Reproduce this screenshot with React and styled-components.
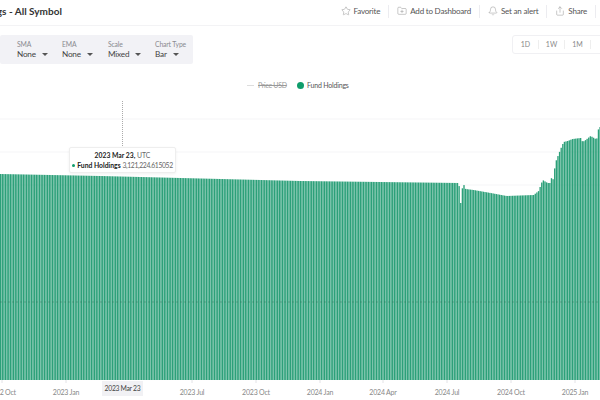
import React from 'react';
import styled, { createGlobalStyle } from 'styled-components';
import { Star, Bell, Share, FolderPlus } from 'lucide-react';

const Global = createGlobalStyle`
  html, body { margin: 0; padding: 0; background: #fff; }
  body { font-family: Lato, "Open Sans", sans-serif; color: #333; }
`;
const Page = styled.div`width: 600px; height: 400px; overflow: hidden; display: flex; flex-direction: column; background: #fff;`;
const Header = styled.header`box-sizing: border-box; height: 26px; padding-bottom: 3px; flex: none; display: flex; align-items: center; justify-content: space-between; border-bottom: 1px solid #f3f3f5;`;
const Title = styled.h1`margin: 0 0 0 -57.5px; font-size: 10px; font-weight: 700; color: #333; white-space: nowrap;`;
const Actions = styled.div`display: flex; align-items: center; margin-right: 4px;`;
const Action = styled.button`
  display: flex; align-items: center; gap: 3px; height: 13px; padding: 0 8px; border: 0; background: none;
  border-right: 1px solid #ececf0; font: 400 8px Lato, sans-serif; letter-spacing: -0.2px; color: #555; white-space: nowrap;
  svg { width: 10px; height: 10px; stroke: #888; stroke-width: 1.1; }
`;
const Controls = styled.div`height: 29px; margin-top: 9px; flex: none; display: flex; justify-content: space-between;`;
const Tools = styled.div`display: flex; width: 193px; height: 29px; background: #f2f2f6; border-radius: 2px;`;
const Tool = styled.div`width: ${p => p.$w}px; margin-left: ${p => p.$ml || 0}px; padding-top: 4px; flex: none;`;
const ToolLabel = styled.div`font-size: 6.8px; letter-spacing: -0.15px; line-height: 10px; color: #8a8a90; white-space: nowrap;`;
const ToolValue = styled.div`display: flex; align-items: center; gap: 6px; font-size: 8.2px; letter-spacing: -0.2px; line-height: 11px; color: #444;`;
const Caret = styled.span`width: 0; height: 0; border-left: 3px solid transparent; border-right: 3px solid transparent; border-top: 3.5px solid #555;`;
const Ranges = styled.div`display: flex; align-items: center; height: 17px; margin-right: -18px; border: 1px solid #f0f0f3; border-radius: 3px;`;
const Range = styled.span`box-sizing: border-box; width: 26px; height: 9px; text-align: center; font-size: 7px; color: #888; border-right: 1px solid #eee; line-height: 9px;`;
const Legend = styled.div`height: 14px; margin-top: 14px; flex: none; display: flex; align-items: center; font-size: 7px; letter-spacing: -0.2px; color: #555;`;
const Off = styled.span`flex: none; width: 46px; display: flex; align-items: center; gap: 4px; color: #999; text-decoration: line-through; margin-left: 247px; letter-spacing: -0.3px;`;
const Dash = styled.i`width: 7px; height: 1px; background: #ddd;`;
const Dot = styled.i`width: 7px; height: 7px; border-radius: 50%; background: #0f9d6b; margin: 0 3px 0 4px;`;
const ChartBox = styled.div`position: relative; flex: 1; min-height: 0;`;
const ChartSvg = styled.svg`display: block; width: 600px; height: 307px;`;
const Tip = styled.div`
  position: absolute; left: 69px; top: 55px; width: 107px; height: 26px; box-sizing: border-box; background: #fff; border: 1px solid #eee;
  border-radius: 2px; box-shadow: 0 1px 3px rgba(0,0,0,.06); text-align: center; font-size: 6.8px; line-height: 9.5px; padding-top: 3px; color: #666; white-space: nowrap;
  b { color: #222; font-weight: 700; }
`;
const TipValue = styled.span`font-size: 6.8px; letter-spacing: -0.35px;`;
const TipDot = styled.i`display: inline-block; width: 3px; height: 3px; border-radius: 50%; background: #0f9d6b; margin: 0 2px 1px 0;`;
const AxisFlag = styled.div`position: absolute; left: 102px; top: 289px; width: 41px; height: 15px; background: #f1f1f4; text-align: center; font-size: 6.8px; letter-spacing: -0.3px; line-height: 15px; color: #444;`;

function heights() {
  const all = [[0,175],[100,177],[200,179.5],[300,182],[458,184],[461,204],[462,183],[465,190],[473,191],[490,194],[506,197],[533,196],[538,192],[542,181],[547,184],[550,184],[551,178],[552,183],[555,163],[560,150],[563,143],[567,142],[572,140],[580,139],[582,143],[585,141],[590,137],[595,140],[597,139],[598,128],[600,128]];
  const at = x => {
    for (let i = 1; i < all.length; i++) if (x <= all[i][0]) {
      const [a, b] = all[i - 1], [c, d] = all[i];
      return b + (d - b) * (x - a) / (c - a);
    }
    return 128;
  };
  const out = [];
  for (let x = 0; x < 600; x += 1.62) out.push([x, x > 458.5 && x < 461.5 ? 204 : at(x)]);
  return out;
}

export default function App() {
  const labels = [[2,'2022 Oct'],[66,'2023 Jan'],[192,'2023 Jul'],[256,'2023 Oct'],[320,'2024 Jan'],[383,'2024 Apr'],[447,'2024 Jul'],[511,'2024 Oct'],[575,'2025 Jan']];
  return (
    <Page>
      <Global />
      <Header>
        <Title>Fund Holdings - All Symbol</Title>
        <Actions>
          <Action><Star />Favorite</Action>
          <Action><FolderPlus />Add to Dashboard</Action>
          <Action><Bell />Set an alert</Action>
          <Action><Share />Share</Action>
        </Actions>
      </Header>
      <Controls>
        <Tools>
          <Tool $w={45} $ml={17}><ToolLabel>SMA</ToolLabel><ToolValue>None<Caret /></ToolValue></Tool>
          <Tool $w={46}><ToolLabel>EMA</ToolLabel><ToolValue>None<Caret /></ToolValue></Tool>
          <Tool $w={47}><ToolLabel>Scale</ToolLabel><ToolValue>Mixed<Caret /></ToolValue></Tool>
          <Tool $w={38}><ToolLabel>Chart Type</ToolLabel><ToolValue>Bar<Caret /></ToolValue></Tool>
        </Tools>
        <Ranges><Range>1D</Range><Range>1W</Range><Range>1M</Range><Range /></Ranges>
      </Controls>
      <Legend>
        <Off><Dash />Price USD</Off>
        <Dot />Fund Holdings
      </Legend>
      <ChartBox>
        <ChartSvg viewBox="0 93 600 307">
          {[120, 153, 186].map(y => <line key={y} x1="0" x2="600" y1={y} y2={y} stroke="#f5f5f7" />)}
          {heights().map(([x, h], i) => <rect key={i} x={x} y={h} width="1.35" height={381 - h} fill="#0f9366" opacity="0.88" />)}
          <line x1="0" x2="600" y1="303" y2="303" stroke="#2f6f56" strokeDasharray="2 2" opacity=".4" />
          <line x1="122.5" x2="122.5" y1="102" y2="148" stroke="#aaa" strokeDasharray="1 1" />
          {labels.map(([x]) => <line key={x} x1={x} x2={x} y1="381" y2="384" stroke="#e2e2e6" />)}
          {labels.map(([x, t]) => <text key={t} x={x} y="395.5" textAnchor="middle" fontSize="7" letterSpacing="-0.2" fill="#888" fontFamily="Lato, sans-serif">{t}</text>)}
        </ChartSvg>
        <Tip><b>2023 Mar 23,</b> UTC<br /><TipDot /><b>Fund Holdings</b> <TipValue>3,121,224.615052</TipValue></Tip>
        <AxisFlag>2023 Mar 23</AxisFlag>
      </ChartBox>
    </Page>
  );
}
